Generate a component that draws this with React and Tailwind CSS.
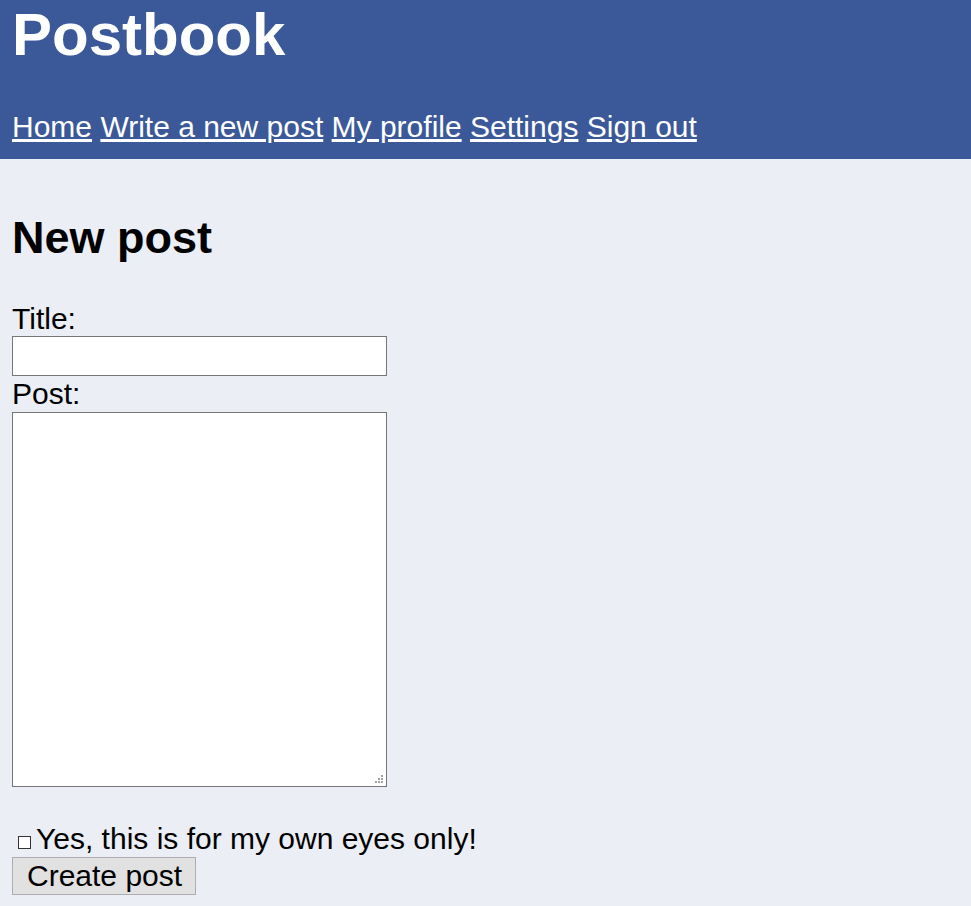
import React, { useState } from "react";

const App = () => {
  const [data, setData] = useState({ title: "", post: "", secret: false });

  const handleChange = (e) => {
    const { name, value, type, checked } = e.target;
    setData({ ...data, [name]: type === "checkbox" ? checked : value });
  };

  return (
    <div className="min-h-screen bg-[#ebeef4] font-['Liberation_Sans',Arial,sans-serif] text-[30px] text-black">
      {/* Header */}
      <header className="h-[159px] bg-[#3b5998] px-[12px] text-white">
        <h1 className="pt-px text-[60px] font-bold leading-[67px]">Postbook</h1>
        <nav className="mt-[42px] leading-[34px]">
          <a href="#" className="underline">Home</a>{" "}
          <a href="#" className="underline">Write a new post</a>{" "}
          <a href="#" className="underline">My profile</a>{" "}
          <a href="#" className="underline">Settings</a>{" "}
          <a href="#" className="underline">Sign out</a>
        </nav>
      </header>

      <main className="px-[12px]">
        <h2 className="mt-[54px] text-[45px] font-bold leading-[50px]">New post</h2>

        <form className="mt-[39px]" onSubmit={(e) => e.preventDefault()}>
          <label className="block leading-[34px]">Title:</label>
          <input
            type="text"
            name="title"
            value={data.title}
            onChange={handleChange}
            className="block h-[40px] w-[375px] border border-[#767676] bg-white px-[3px] text-[20px] outline-none"
          />
          <label className="block leading-[36px]">Post:</label>
          <div className="relative w-[375px]">
            <textarea
              name="post"
              value={data.post}
              onChange={handleChange}
              className="block h-[375px] w-[375px] resize-none border border-[#767676] bg-white p-[3px] text-[20px] outline-none"
            />
            {/* resize grip */}
            <svg className="absolute bottom-[3px] right-[3px]" width="9" height="9" viewBox="0 0 9 9">
              <rect x="6" y="0" width="2" height="2" fill="#a3a3a3" />
              <rect x="3" y="3" width="2" height="2" fill="#a3a3a3" />
              <rect x="6" y="3" width="2" height="2" fill="#a3a3a3" />
              <rect x="0" y="6" width="2" height="2" fill="#a3a3a3" />
              <rect x="3" y="6" width="2" height="2" fill="#a3a3a3" />
              <rect x="6" y="6" width="2" height="2" fill="#a3a3a3" />
            </svg>
          </div>

          {/* Private checkbox */}
          <label className="mt-[35px] flex items-start leading-[34px]">
            <input
              type="checkbox"
              name="secret"
              checked={data.secret}
              onChange={handleChange}
              className="ml-[6px] mr-[5px] mt-[14px] h-[13px] w-[13px] appearance-none border border-[#333] bg-white checked:bg-[#333]"
            />
            Yes, this is for my own eyes only!
          </label>

          <button
            type="submit"
            className="mt-[1px] block h-[38px] border border-[#adadad] bg-[#e1e1e1] pl-[14px] pr-[13px] leading-[34px]"
          >
            Create post
          </button>
        </form>
      </main>
    </div>
  );
};

export default App;
